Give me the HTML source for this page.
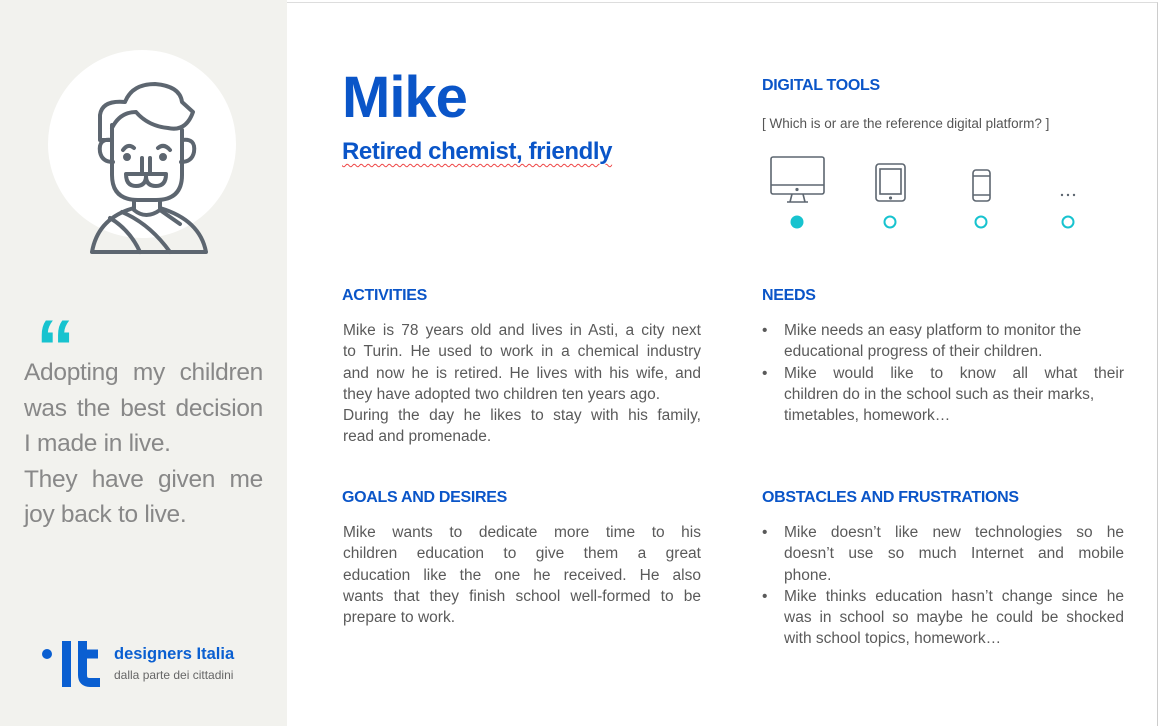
<!DOCTYPE html>
<html><head><meta charset="utf-8"><style>
*{margin:0;padding:0;box-sizing:border-box}
body{width:1162px;height:726px;background:#fff;font-family:"Liberation Sans",sans-serif;position:relative;overflow:hidden;color:#555}
.left{position:absolute;left:0;top:0;width:287px;height:726px;background:#f2f2ee}
.frame{position:absolute;left:287px;top:2px;width:871px;height:724px;border-top:1px solid #ddd;border-right:1px solid #ccc}
.abs{position:absolute}
h2{position:absolute;font-size:16px;font-weight:bold;color:#0a55c8;letter-spacing:-0.3px}
.p{position:absolute;font-size:15.5px;line-height:21.3px;color:#5a5a5a;white-space:nowrap}
.p span{display:block}
.p span.j{text-align:justify;text-align-last:justify}
ul{list-style:none}
li{position:relative;padding-left:22px}
li:before{content:"•";position:absolute;left:0;top:0}
.quote{position:absolute;left:24px;top:355px;width:239px;font-size:24.5px;line-height:35.5px;color:#888;text-align:justify;letter-spacing:-0.3px}
</style></head><body>
<div class="left"></div>
<div class="frame"></div>
<div class="abs" style="left:48px;top:50px;width:188px;height:188px;border-radius:50%;background:#fff"></div>
<svg class="abs" style="left:40px;top:40px" width="220" height="230" viewBox="0 0 220 230" fill="none" stroke="#5d6670" stroke-width="4" stroke-linecap="round" stroke-linejoin="round">
<path d="M72 100 Q58 98 60 112 Q62 122 73 122"/>
<path d="M142 100 Q156 98 154 112 Q152 122 141 122"/>
<path d="M72 85 L72 135 Q72 160 98 160 L116 160 Q142 160 142 135 L142 90"/>
<path d="M72 100 L60 100 L60 75 Q62 60 85 62 Q92 44 115 44 Q140 46 142 62 L153 72 Q146 92 128 88 Q108 86 96 72 Q80 72 72 88"/>
<path d="M83 110 Q88 103 94 108"/><path d="M118 108 Q124 103 130 110"/>
<circle cx="87" cy="117" r="2" fill="#5d6670"/><circle cx="123" cy="117" r="2" fill="#5d6670"/>
<path d="M102 118 L102 132 M110 118 L110 132"/>
<path d="M86 134 Q86 146 96 146 Q106 146 106 136 Q106 146 116 146 Q126 146 126 134 Z"/>
<path d="M94 160 L94 170 Q106 180 120 170 L120 160"/>
<path d="M94 168 Q58 178 52 212 L166 212 Q160 180 120 168"/>
<path d="M70 178 Q90 190 100 212 M82 172 Q110 184 130 212 M120 170 L140 184"/>
</svg>
<div class="abs" style="left:36px;top:308px;font-size:78px;font-weight:bold;color:#17c3cf;line-height:78px">“</div>
<div class="quote">Adopting my children was the best decision I made in live.<br>They have given me joy back to live.</div>
<div class="abs" style="left:42px;top:649px;width:10px;height:10px;border-radius:50%;background:#0a5fd1"></div>
<div class="abs" style="left:62px;top:641px;width:9px;height:46px;background:#0a5fd1"></div>
<svg class="abs" style="left:78px;top:641px" width="24" height="46" viewBox="0 0 24 46"><path d="M4.5 0 V34 Q4.5 41.5 12 41.5 H22 M0 13 H20" stroke="#0a5fd1" stroke-width="9" fill="none"/></svg>
<div class="abs" style="left:114px;top:645px;font-size:16.5px;font-weight:bold;color:#0a5fd1">designers Italia</div>
<div class="abs" style="left:114px;top:668px;font-size:12px;color:#666">dalla parte dei cittadini</div>

<div class="abs" style="left:342px;top:64px;font-size:58px;font-weight:bold;color:#0a55c8;letter-spacing:-1px">Mike</div>
<div class="abs" style="left:342px;top:138px;font-size:24px;font-weight:bold;color:#0a55c8;letter-spacing:-0.4px;text-decoration:underline wavy #e44;text-decoration-thickness:1px;text-underline-offset:4px">Retired chemist, friendly</div>

<h2 style="left:762px;top:77px">DIGITAL TOOLS</h2>
<div class="abs" style="left:762px;top:116px;font-size:13.5px;color:#555">[ Which is or are the reference digital platform? ]</div>
<svg class="abs" style="left:750px;top:140px" width="350" height="100" viewBox="0 0 350 100" fill="none" stroke="#5d6670" stroke-width="1.6">
<rect x="21" y="17" width="53" height="37" rx="2"/><line x1="21" y1="45" x2="74" y2="45"/><path d="M42 54 L40 62 M53 54 L55 62 M37 62 H58"/><circle cx="47" cy="49.5" r="0.8" fill="#5d6670"/>
<rect x="126" y="24" width="29" height="37" rx="3"/><rect x="130" y="29" width="21" height="25"/><circle cx="140.5" cy="58" r="0.8" fill="#5d6670"/>
<rect x="223" y="30" width="17" height="31" rx="3"/><line x1="223" y1="36" x2="240" y2="36"/><line x1="223" y1="55" x2="240" y2="55"/>
<g fill="#5d6670" stroke="none"><circle cx="312" cy="55" r="1.2"/><circle cx="318" cy="55" r="1.2"/><circle cx="324" cy="55" r="1.2"/></g>
<circle cx="47" cy="82" r="6.5" fill="#17c3cf" stroke="none"/>
<g stroke="#17c3cf" stroke-width="2"><circle cx="140" cy="82" r="5.5"/><circle cx="231" cy="82" r="5.5"/><circle cx="318" cy="82" r="5.5"/></g>
</svg>

<h2 style="left:342px;top:287px">ACTIVITIES</h2>
<div class="p" style="left:343px;top:320px;width:358px">
<span class="j">Mike is 78 years old and lives in Asti, a city next</span>
<span class="j">to Turin. He used to work in a chemical industry</span>
<span class="j">and now he is retired. He lives with his wife, and</span>
<span>they have adopted two children ten years ago.</span>
<span class="j">During the day he likes to stay with his family,</span>
<span>read and promenade.</span></div>
<h2 style="left:342px;top:489px">GOALS AND DESIRES</h2>
<div class="p" style="left:343px;top:522px;width:358px">
<span class="j">Mike wants to dedicate more time to his</span>
<span class="j">children education to give them a great</span>
<span class="j">education like the one he received. He also</span>
<span class="j">wants that they finish school well-formed to be</span>
<span>prepare to work.</span></div>

<h2 style="left:762px;top:287px">NEEDS</h2>
<ul class="p" style="left:762px;top:320px;width:362px">
<li><span>Mike needs an easy platform to monitor the</span><span>educational progress of their children.</span></li>
<li><span class="j">Mike would like to know all what their</span><span>children do in the school such as their marks,</span><span>timetables, homework…</span></li></ul>
<h2 style="left:762px;top:489px">OBSTACLES AND FRUSTRATIONS</h2>
<ul class="p" style="left:762px;top:522px;width:362px">
<li><span class="j">Mike doesn’t like new technologies so he</span><span class="j">doesn’t use so much Internet and mobile</span><span>phone.</span></li>
<li><span class="j">Mike thinks education hasn’t change since he</span><span class="j">was in school so maybe he could be shocked</span><span>with school topics, homework…</span></li></ul>
</body></html>
